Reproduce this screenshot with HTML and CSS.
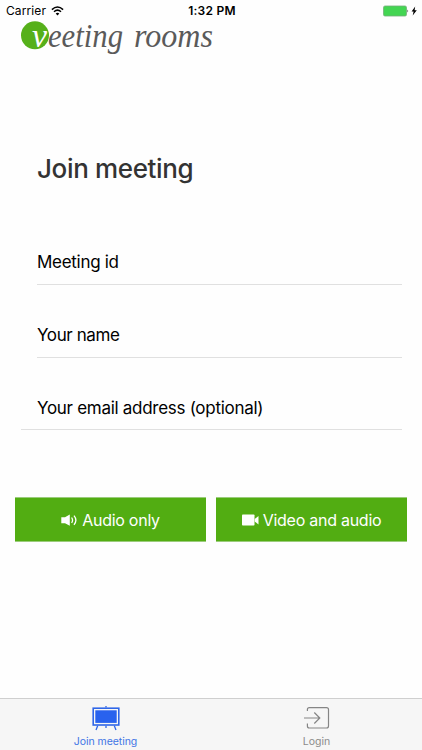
FILE: index.html
```
<!DOCTYPE html>
<html lang="en">
<head>
<meta charset="utf-8">
<title>Veeting Rooms</title>
<link rel="stylesheet" href="styles.css">
</head>
<body>
<div class="app">
  <header class="status">
    <div class="carrier"><span>Carrier</span>
      <svg class="wifi" width="13" height="10" viewBox="0 0 13 10"><path d="M.9 3.6Q6.5-1.7 12.1 3.6M3 5.8Q6.5 2.5 10 5.8" fill="none" stroke="#000" stroke-width="1.5"/><path d="M4.7 7.6Q6.5 6 8.3 7.6L6.5 9.5Z"/></svg>
    </div>
    <span class="time">1:32 PM</span>
    <div class="power">
      <svg width="35" height="12" viewBox="0 0 35 12"><rect x=".5" y="1" width="23" height="10" rx="1.5" fill="#43d552" stroke="#74ad79" stroke-width=".8"/><path d="M24.5 4.5q1.4 1.5 0 3z" fill="#222"/><path d="M32.2 1.5 28.6 6.6h2L29.7 10.5 33.8 5.2h-2.2z"/></svg>
    </div>
  </header>
  <div class="logo">
    <svg width="200" height="46" viewBox="0 0 200 46"><circle cx="14" cy="14.3" r="14" fill="#56b01a"/><text class="logo-v" x="11" y="26" textLength="15" lengthAdjust="spacingAndGlyphs">v</text><text class="logo-text" x="27" y="26" textLength="75" lengthAdjust="spacingAndGlyphs">eeting</text><text class="logo-text" x="113" y="26" textLength="79" lengthAdjust="spacingAndGlyphs">rooms</text></svg>
  </div>
  <main>
    <h1>Join meeting</h1>
    <form>
      <div class="field"><span class="f1">Meeting id</span></div>
      <div class="field"><span class="f2">Your name</span></div>
      <div class="field last"><span class="f3">Your email address (optional)</span></div>
    </form>
    <div class="actions">
      <button type="button">
        <svg width="17" height="14" viewBox="0 0 17 14"><path d="M.3 4.2H4L8.8 1.6V12.8L4 10.2H.3Z" fill="#fff"/><path d="M10.6 4.5Q12.5 7.2 10.6 9.9M13 2.6Q16.8 7.2 13 11.8" fill="none" stroke="#fff" stroke-width="1.3"/></svg>
        <span class="b1">Audio only</span>
      </button>
      <button type="button">
        <svg width="17" height="12" viewBox="0 0 17 12"><rect y=".5" width="12.5" height="11" rx=".8" fill="#fff"/><path d="M12.7 5 16.5 2v8.5L12.7 7.5Z" fill="#fff"/></svg>
        <span class="b2">Video and audio</span>
      </button>
    </div>
  </main>
  <nav>
    <div class="tab active">
      <svg width="28" height="26" viewBox="0 0 28 26"><g stroke="#2f66e8" fill="none"><rect x="1.2" y="3.2" width="25.6" height="16.8" stroke-width="1.6"/><path d="M14 1V2.5M5.7 20.8 4 25M14 20.8V23M22.3 20.8 24 25" stroke-width="1.3"/></g><rect x="3.3" y="5.3" width="21.4" height="12.6" fill="#2962ee"/></svg>
      <span class="t1">Join meeting</span>
    </div>
    <div class="tab">
      <svg width="28" height="26" viewBox="0 0 28 26"><path d="M4.4 6V4.5Q4.4 2.6 6.3 2.6H23.5Q25.5 2.6 25.5 4.6V21Q25.5 23 23.5 23H6.3Q4.4 23 4.4 21V18.5M1 13H16.5M11.3 7.5 16.8 13 11.3 18.5" fill="none" stroke="#858585" stroke-width="1.2"/></svg>
      <span class="t2">Login</span>
    </div>
  </nav>
</div>
</body>
</html>
```
FILE: styles.css
```
* { box-sizing: border-box; }
body { margin: 0; background: #fefefe; font-family: Inter, "Liberation Sans", sans-serif; color: #000; }
.app { height: 750px; display: flex; flex-direction: column; overflow: hidden; }
.status { height: 21px; flex: none; display: grid; grid-template-columns: 1fr auto 1fr; align-items: center; padding: 0 4px 0 6px; }
.carrier { display: flex; align-items: center; gap: 5px; font-size: 12px; line-height: 14px; letter-spacing: 0.1px; }
.time { font-size: 12px; line-height: 14px; font-weight: 600; letter-spacing: 0.25px; }
.power { display: flex; justify-content: flex-end; }
.logo { height: 46px; flex: none; padding-left: 21px; }
.logo svg { display: block; overflow: visible; }
.logo-text, .logo-v { font-family: "Liberation Serif", serif; font-style: italic; font-size: 34px; fill: #5a5a5a; }
.logo-v { fill: #fff; }
main { flex: 1; display: flex; flex-direction: column; }
h1 { margin: 84px 0 0 37px; font-size: 26px; line-height: 36px; font-weight: 450; color: #333; letter-spacing: -0.35px; }
form { margin-top: 38px; padding: 0 20px 0 21px; }
.field { height: 60px; margin: 0 0 12.5px 16px; border-bottom: 1px solid #e0e0e0; padding-top: 25px; font-size: 17px; line-height: 25px; white-space: nowrap; }
.field.last { margin: 0; padding: 26px 0 0 16px; }
.f1, .f3 { letter-spacing: -0.29px; }
.f2 { letter-spacing: -0.4px; }
.actions { display: grid; grid-template-columns: 1fr 1fr; gap: 10px; padding: 0 15px; margin-top: 67px; }
button { height: 45px; border: 1px solid #9bcc7c; border-width: 1px 0; border-radius: 0; background: #52ad12; color: #fff; font: 400 16px/24px Inter, sans-serif; letter-spacing: -0.26px; display: flex; align-items: center; justify-content: center; gap: 4px; padding: 1px 0 0; white-space: nowrap; }
nav { height: 52px; flex: none; display: grid; grid-template-columns: 1fr 1fr; background: #f6f6f6; border-top: 1px solid #cfcfcf; }
.tab { display: flex; flex-direction: column; align-items: center; padding-top: 6px; font-size: 10.5px; line-height: 14px; color: #8b8b8b; gap: 4px; }
.active { color: #4275e5; }
.t1 { letter-spacing: -0.05px; }
```
